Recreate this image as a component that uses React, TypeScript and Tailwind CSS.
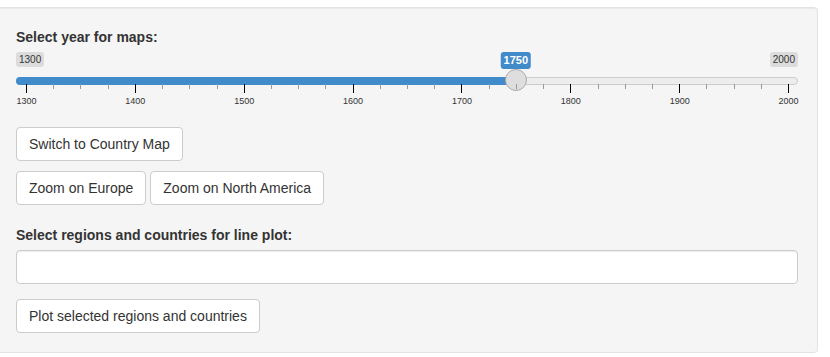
const MIN = 1300;
const MAX = 2000;
const VALUE = 1750;

// slider geometry (px, relative to the slider box)
const WIDTH = 782;
const GRID_START = 10;
const GRID_WIDTH = 762;

const toX = (year: number) => GRID_START + ((year - MIN) / (MAX - MIN)) * GRID_WIDTH;

function YearSlider() {
  const thumbX = toX(VALUE);
  const ticks = Array.from({ length: 29 }, (_, i) => MIN + i * 25);

  return (
    <div className="relative h-[60px]" style={{ width: WIDTH }}>
      {/* min / max labels */}
      <div className="flex justify-between">
        <span className="rounded-[3px] bg-[#dcdcdc] px-[3px] py-px text-[10px] leading-[13px] text-[#333]">
          {MIN}
        </span>
        <span className="rounded-[3px] bg-[#dcdcdc] px-[3px] py-px text-[10px] leading-[13px] text-[#333]">
          {MAX}
        </span>
      </div>

      {/* track */}
      <div className="mt-[10px] h-2 rounded-full border border-[#cccccc] bg-[#ededed]" />
      <div
        className="absolute left-0 top-[25px] h-2 rounded-l-full bg-[#428bca]"
        style={{ width: thumbX }}
      />

      {/* current value */}
      <span
        className="absolute top-0 -translate-x-1/2 rounded-[3px] bg-[#428bca] px-[3px] py-px text-[11px] font-bold leading-[15px] text-white"
        style={{ left: thumbX }}
      >
        {VALUE}
      </span>

      {/* handle */}
      <div
        className="absolute top-[17px] h-[22px] w-[22px] -translate-x-1/2 rounded-full border border-[#ababab] bg-[#dedede]"
        style={{ left: thumbX }}
      />

      {/* grid */}
      {ticks.map((year) => {
        const major = (year - MIN) % 100 === 0;
        return (
          <div key={year}>
            <div
              className={
                major
                  ? "absolute top-[32px] h-[9px] w-px bg-[#000]"
                  : "absolute top-[32px] h-[5px] w-px bg-[#999]"
              }
              style={{ left: toX(year) }}
            />
            {major && (
              <span
                className="absolute top-[43px] -translate-x-1/2 text-[9px] leading-[12px] text-[#333]"
                style={{ left: toX(year) + 0.5 }}
              >
                {year}
              </span>
            )}
          </div>
        );
      })}
    </div>
  );
}

const btn =
  "h-[34px] rounded-[4px] border border-[#cccccc] bg-white px-3 text-[14px] leading-5 text-[#333]";

export default function App() {
  return (
    <div className="min-h-[357px] bg-white pt-[7px] font-['Liberation_Sans',Arial,sans-serif] text-[14px] text-[#333]">
      {/* well panel */}
      <div className="ml-[-4px] w-[822px] rounded-[4px] border border-[#e3e3e3] bg-[#f5f5f5] p-[19px] shadow-[inset_0_1px_1px_rgba(0,0,0,0.05)]">
        {/* year slider */}
        <div className="mb-[15px]">
          <label className="mb-[5px] block font-bold leading-5">Select year for maps:</label>
          <YearSlider />
        </div>

        <div>
          <button className={btn}>Switch to Country Map</button>
        </div>
        <div className="mt-[10px] flex gap-1">
          <button className={btn}>Zoom on Europe</button>
          <button className={btn}>Zoom on North America</button>
        </div>

        {/* line plot selection */}
        <div className="mt-5 mb-[15px]">
          <label className="mb-[5px] block font-bold leading-5">
            Select regions and countries for line plot:
          </label>
          <div className="h-[34px] w-full rounded-[4px] border border-[#cccccc] bg-white shadow-[inset_0_1px_1px_rgba(0,0,0,0.075)]" />
        </div>

        <button className={btn}>Plot selected regions and countries</button>
      </div>
    </div>
  );
}
